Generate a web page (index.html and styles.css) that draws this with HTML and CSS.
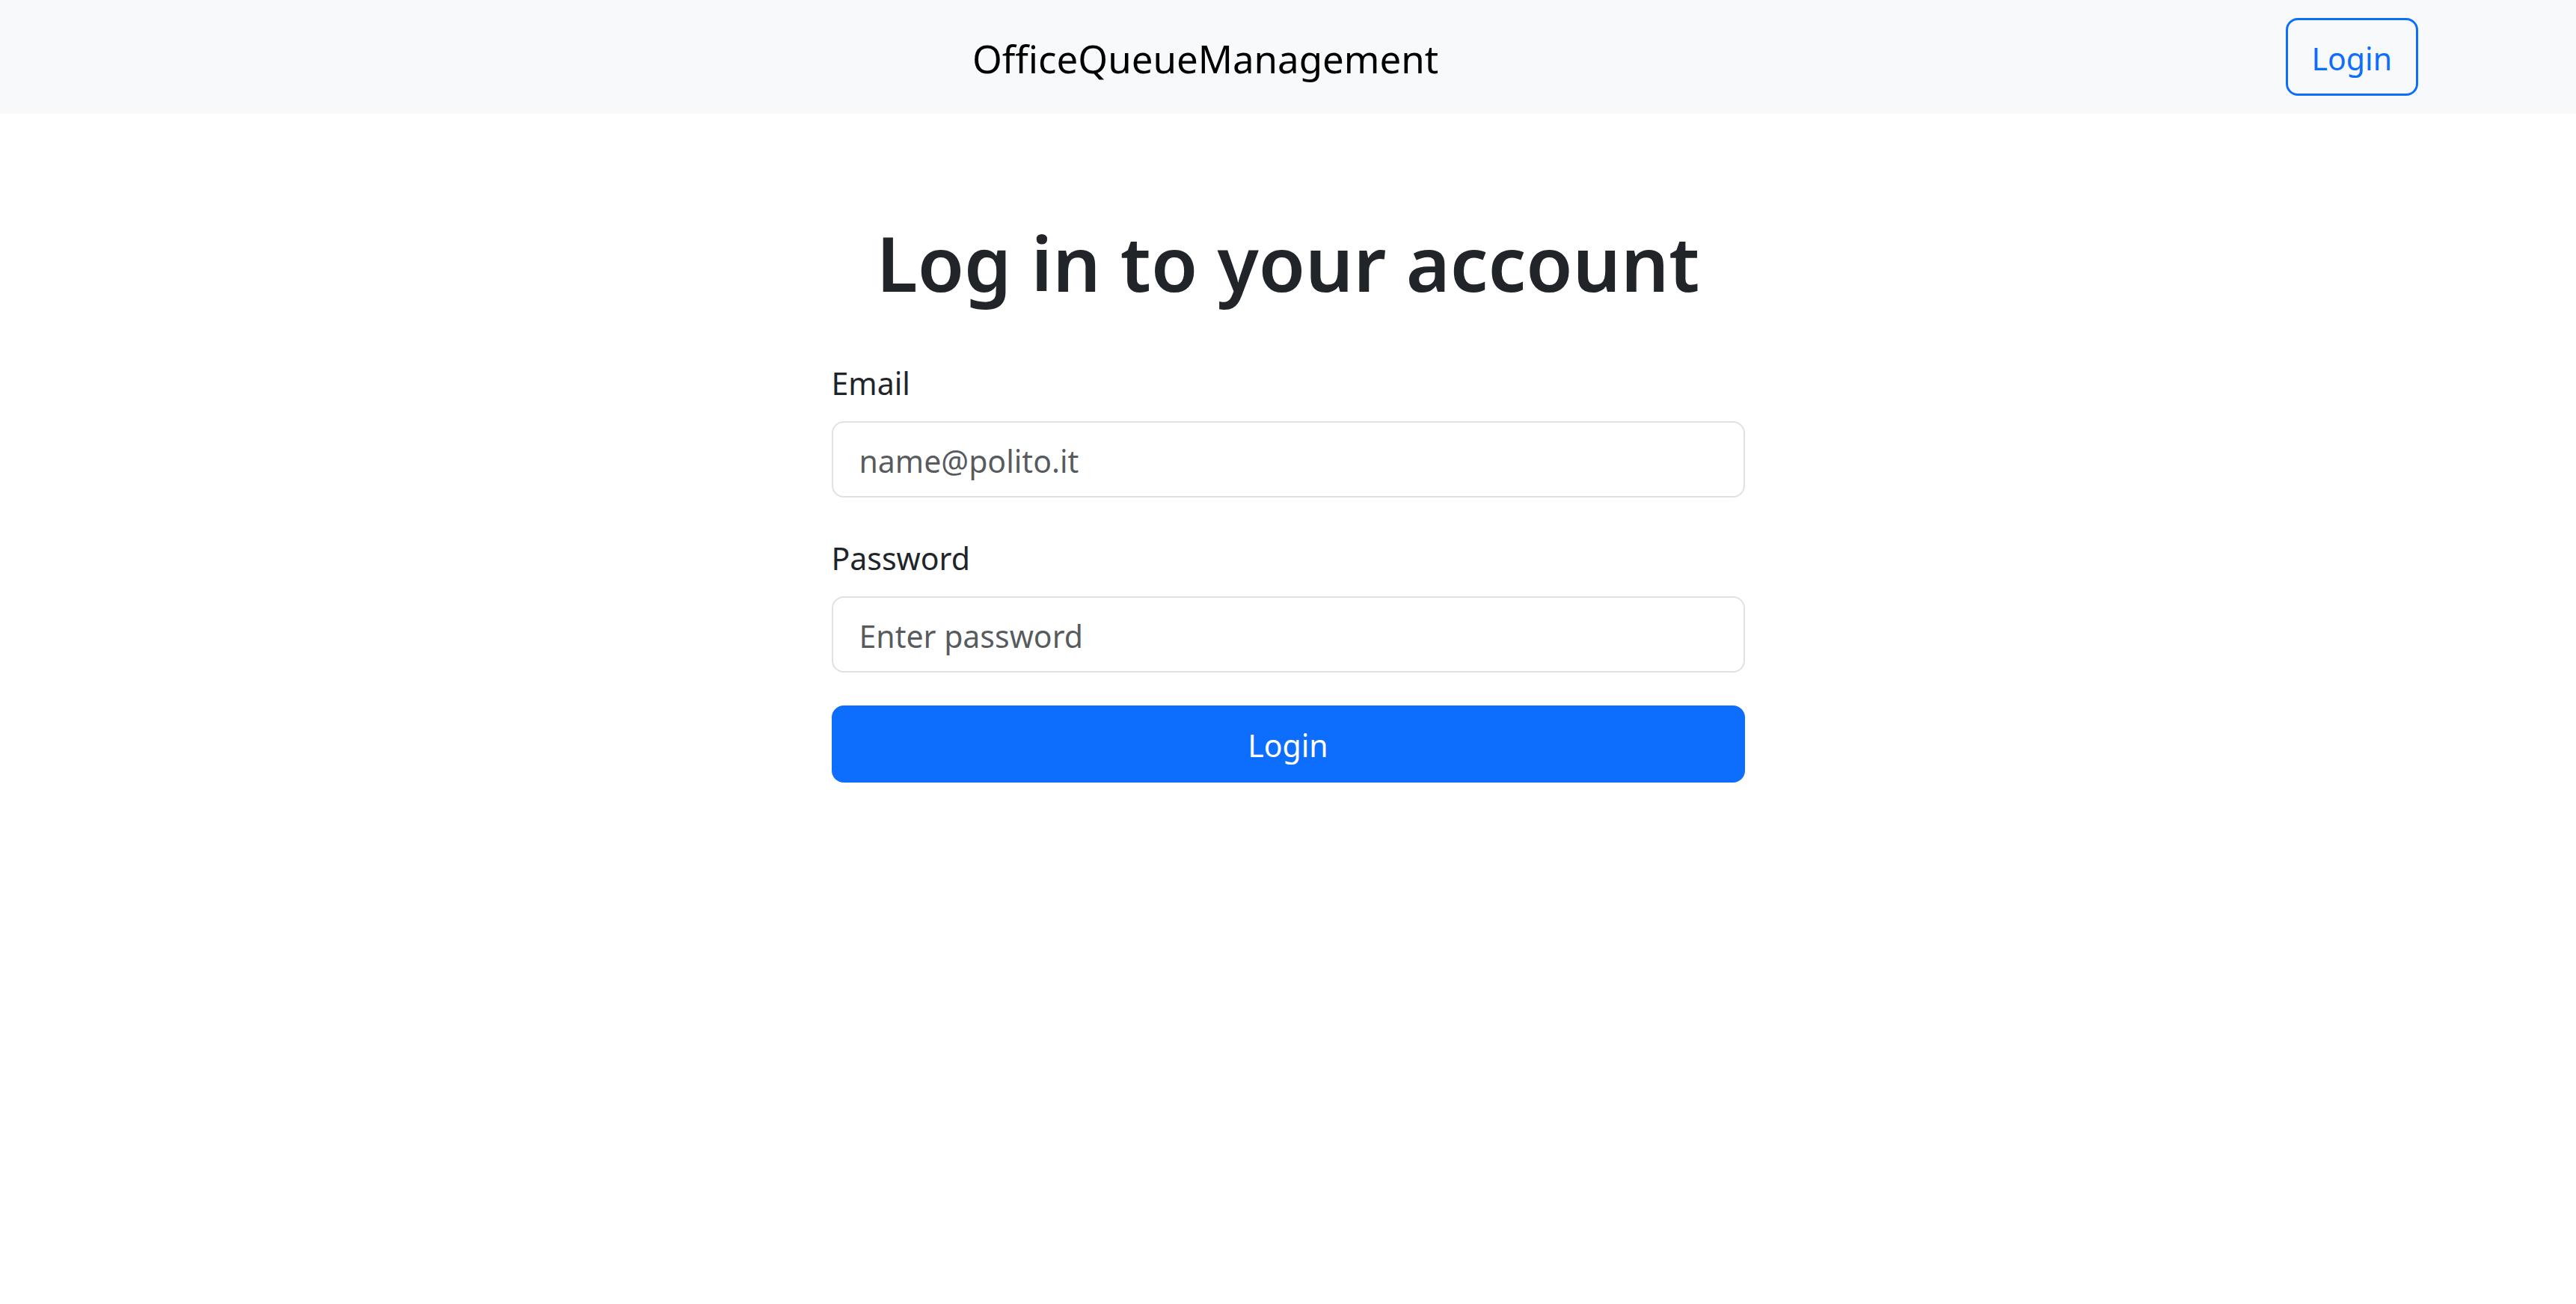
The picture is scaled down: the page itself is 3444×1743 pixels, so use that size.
FILE: index.html
```html
<!DOCTYPE html>
<html lang="en">
<head>
<meta charset="utf-8">
<title>OfficeQueueManagement</title>
<link rel="stylesheet" href="styles.css">
</head>
<body>
<nav class="navbar">
  <span class="brand">OfficeQueueManagement</span>
  <button class="btn-outline" type="button">Login</button>
</nav>
<main class="page">
  <h1 class="title">Log in to your account</h1>
  <form class="login-form">
    <div class="field">
      <label class="field-label" for="email">Email</label>
      <input class="field-input" id="email" type="email" placeholder="name@polito.it">
    </div>
    <div class="field">
      <label class="field-label" for="password">Password</label>
      <input class="field-input" id="password" type="password" placeholder="Enter password">
    </div>
    <button class="btn-primary" type="submit">Login</button>
  </form>
</main>
</body>
</html>
```
FILE: styles.css
```css
* { box-sizing: border-box; }

body {
  margin: 0;
  font-family: "Noto Sans", "Open Sans", sans-serif;
  color: #212529;
  background: #ffffff;
}

.navbar {
  display: flex;
  align-items: center;
  height: 152px;
  padding: 0 211px 0 1300px;
  background: #f8f9fa;
}

.brand {
  padding-top: 4px;
  font-size: 51px;
  line-height: 82px;
  color: #000000;
}

.btn-outline {
  margin-left: auto;
  height: 104px;
  padding: 4px 32px 0;
  border: 3px solid #0d6efd;
  border-radius: 16px;
  background: transparent;
  color: #0d6efd;
  font-family: "Noto Sans", "Open Sans", sans-serif;
  font-size: 41px;
  line-height: 66px;
}

.page {
  display: flex;
  flex-direction: column;
  align-items: center;
}

.title {
  margin: 133px 0 0;
  font-size: 101px;
  line-height: 132px;
  font-weight: 600;
  color: #212529;
}

.login-form {
  width: 1221px;
  margin-top: 58px;
}

.field {
  margin-bottom: 44px;
}

.field-label {
  display: block;
  padding-top: 4px;
  margin-bottom: 18px;
  font-size: 41px;
  line-height: 66px;
}

.field-input {
  display: block;
  width: 100%;
  height: 102px;
  padding: 3px 35px 0;
  border: 2px solid #dee2e6;
  border-radius: 16px;
  background: #ffffff;
  color: #212529;
  font-family: "Noto Sans", "Open Sans", sans-serif;
  font-size: 41px;
  outline: none;
}

.field-input::placeholder {
  color: rgba(33, 37, 41, 0.75);
}

.btn-primary {
  display: block;
  width: 100%;
  height: 103px;
  padding-top: 3px;
  border: 0;
  border-radius: 16px;
  background: #0d6efd;
  color: #ffffff;
  font-family: "Noto Sans", "Open Sans", sans-serif;
  font-size: 41px;
  line-height: 66px;
}
```
